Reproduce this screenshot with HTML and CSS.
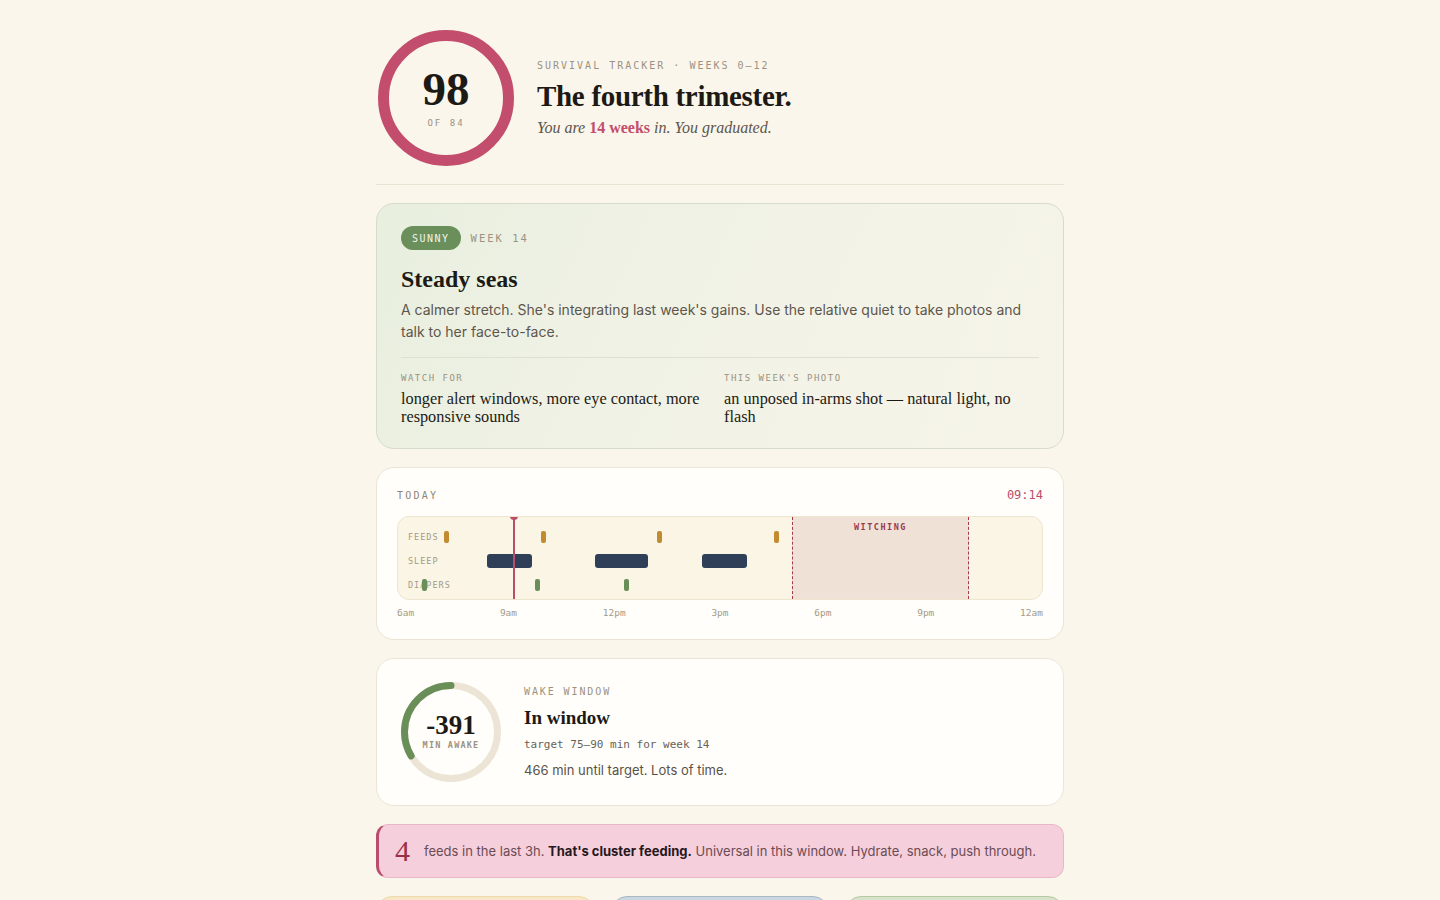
FILE: index.html
```html
<!DOCTYPE html>
<html lang="en">
<head>
<meta charset="utf-8">
<title>Survival Tracker</title>
<link rel="stylesheet" href="styles.css">
</head>
<body>
<main class="page">
  <header class="hero">
    <div class="score-ring">
      <div class="score-num">98</div>
      <div class="score-of">OF 84</div>
    </div>
    <div class="hero-text">
      <div class="eyebrow">SURVIVAL TRACKER · WEEKS 0–12</div>
      <h1 class="hero-title">The fourth trimester.</h1>
      <p class="hero-sub">You are <strong>14 weeks</strong> in. You graduated.</p>
    </div>
  </header>

  <section class="card week-card">
    <div class="week-head">
      <span class="pill">SUNNY</span>
      <span class="week-num">WEEK 14</span>
    </div>
    <h2 class="week-title">Steady seas</h2>
    <p class="week-body">A calmer stretch. She's integrating last week's gains. Use the relative quiet to take photos and talk to her face-to-face.</p>
    <div class="week-cols">
      <div class="week-col">
        <div class="mini-label">WATCH FOR</div>
        <div class="col-value">longer alert windows, more eye contact, more responsive sounds</div>
      </div>
      <div class="week-col">
        <div class="mini-label">THIS WEEK'S PHOTO</div>
        <div class="col-value">an unposed in-arms shot — natural light, no flash</div>
      </div>
    </div>
  </section>

  <section class="card today-card">
    <div class="today-head">
      <span class="today-label">TODAY</span>
      <span class="today-time">09:14</span>
    </div>
    <div class="track">
      <div class="witching" style="left:61.18%;width:27.48%"><span>WITCHING</span></div>
      <span class="row-label row-feeds">FEEDS</span>
      <span class="row-label row-sleep">SLEEP</span>
      <span class="row-label row-diapers">DIAPERS</span>
      <span class="mark feed" style="left:7.22%"></span>
      <span class="mark feed" style="left:22.28%"></span>
      <span class="mark feed" style="left:40.14%"></span>
      <span class="mark feed" style="left:58.31%"></span>
      <span class="mark sleep" style="left:13.82%;width:6.99%"></span>
      <span class="mark sleep" style="left:30.59%;width:8.23%"></span>
      <span class="mark sleep" style="left:47.2%;width:6.99%"></span>
      <span class="mark diaper" style="left:3.65%"></span>
      <span class="mark diaper" style="left:21.2%"></span>
      <span class="mark diaper" style="left:35.17%"></span>
      <span class="now" style="left:17.78%"></span>
    </div>
    <div class="axis">
      <span>6am</span><span>9am</span><span>12pm</span><span>3pm</span><span>6pm</span><span>9pm</span><span>12am</span>
    </div>
  </section>

  <section class="card wake-card">
    <div class="wake-ring">
      <svg class="wake-svg" viewBox="0 0 100 100" width="100" height="100" aria-hidden="true">
        <circle cx="50" cy="50" r="46.5" fill="none" stroke="#ece5d6" stroke-width="7"/>
        <circle cx="50" cy="50" r="46.5" fill="none" stroke="#6a8e58" stroke-width="7" stroke-linecap="round" stroke-dasharray="98 300" transform="translate(100 0) scale(-1 1) rotate(-90 50 50)"/>
      </svg>
      <div class="wake-center">
        <div class="wake-num">-391</div>
        <div class="wake-unit">MIN AWAKE</div>
      </div>
    </div>
    <div class="wake-text">
      <div class="eyebrow small">WAKE WINDOW</div>
      <h3 class="wake-title">In window</h3>
      <div class="wake-target">target 75–90 min for week 14</div>
      <p class="wake-body">466 min until target. Lots of time.</p>
    </div>
  </section>

  <section class="alert">
    <span class="alert-num">4</span>
    <p class="alert-text">feeds in the last 3h. <strong>That's cluster feeding.</strong> Universal in this window. Hydrate, snack, push through.</p>
  </section>

  <section class="tiles">
    <div class="tile tile-yellow"><div class="mini-label">FEEDS</div><div class="tile-num">7</div></div>
    <div class="tile tile-blue"><div class="mini-label">SLEEP</div><div class="tile-num">4h 12m</div></div>
    <div class="tile tile-green"><div class="mini-label">DIAPERS</div><div class="tile-num">5</div></div>
  </section>
</main>
</body>
</html>
```

FILE: styles.css
```css
* { box-sizing: border-box; }

html, body {
  margin: 0;
  padding: 0;
  background: #faf6eb;
}

body {
  font-family: "Inter", "Noto Sans", sans-serif;
  color: #1d1a15;
}

.page {
  width: 688px;
  margin: 0 auto;
  padding: 30px 0 40px;
}

/* ---------- hero ---------- */
.hero {
  display: flex;
  align-items: center;
  gap: 23px;
  padding: 0 0 18px 2px;
  border-bottom: 1px solid #ebe4d4;
}

.score-ring {
  width: 136px;
  height: 136px;
  border-radius: 50%;
  border: 11px solid #c24d6d;
  display: flex;
  flex-direction: column;
  align-items: center;
  justify-content: center;
  flex: none;
}

.score-num {
  font-family: "Liberation Serif", serif;
  font-weight: 700;
  font-size: 47px;
  line-height: 44px;
  color: #1d1a15;
  margin-top: -2px;
}

.score-of {
  font-family: "DejaVu Sans Mono", monospace;
  font-size: 9px;
  letter-spacing: 2px;
  color: #9b9282;
  margin-top: 7px;
}

.eyebrow {
  font-family: "DejaVu Sans Mono", monospace;
  font-size: 10px;
  line-height: 14px;
  letter-spacing: 2px;
  color: #9b9282;
}

.hero-title {
  margin: 6px 0 0;
  font-family: "Liberation Serif", serif;
  font-weight: 700;
  font-size: 29px;
  line-height: 34px;
  color: #1d1a15;
  letter-spacing: -0.3px;
}

.hero-sub {
  margin: 5px 0 0;
  font-family: "Liberation Serif", serif;
  font-style: italic;
  font-size: 16px;
  line-height: 20px;
  color: #5d554b;
}

.hero-sub strong {
  font-style: normal;
  font-weight: 700;
  color: #c24d6d;
}

/* ---------- cards ---------- */
.card {
  margin-top: 18px;
  border-radius: 18px;
  border: 1px solid #ece5d6;
  background: #fffefb;
}

.week-card {
  padding: 22px 24px 22px;
  border-color: #d6dcc9;
  background: linear-gradient(115deg, #e8efdf 0%, #f1f2e6 45%, #f6f4e9 100%);
}

.week-head {
  display: flex;
  align-items: center;
  gap: 10px;
}

.pill {
  display: inline-flex;
  align-items: center;
  height: 24px;
  padding: 0 11px;
  border-radius: 12px;
  background: #6b8f5a;
  color: #f2f4ea;
  font-family: "DejaVu Sans Mono", monospace;
  font-size: 10px;
  letter-spacing: 1.5px;
}

.week-num {
  font-family: "DejaVu Sans Mono", monospace;
  font-size: 10.5px;
  letter-spacing: 2px;
  color: #9b9282;
}

.week-title {
  margin: 15px 0 0;
  font-family: "Liberation Serif", serif;
  font-weight: 700;
  font-size: 24px;
  line-height: 28px;
  color: #1d1a15;
}

.week-body {
  margin: 6px 0 0;
  font-size: 14px;
  line-height: 22px;
  color: #5e564c;
  padding-bottom: 14px;
  border-bottom: 1px solid #dfe0d2;
}

.week-cols {
  display: grid;
  grid-template-columns: 1fr 1fr;
  gap: 8px;
  padding-top: 14px;
}

.mini-label {
  font-family: "DejaVu Sans Mono", monospace;
  font-size: 9px;
  line-height: 12px;
  letter-spacing: 1.5px;
  color: #9b9282;
}

.col-value {
  margin-top: 6px;
  font-family: "Liberation Serif", serif;
  font-size: 16.3px;
  line-height: 18px;
  color: #1d1a15;
  padding-right: 8px;
}

/* ---------- today ---------- */
.today-card {
  padding: 20px 20px 20px;
}

.today-head {
  display: flex;
  justify-content: space-between;
  align-items: center;
  height: 14px;
}

.today-label {
  font-family: "DejaVu Sans Mono", monospace;
  font-size: 10px;
  letter-spacing: 2.2px;
  color: #8e8575;
}

.today-time {
  font-family: "DejaVu Sans Mono", monospace;
  font-size: 12px;
  color: #b94d6a;
}

.track {
  position: relative;
  margin-top: 14px;
  height: 84px;
  border: 1px solid #eee5d1;
  border-radius: 12px;
  background: #fbf5e6;
  overflow: hidden;
}

.witching {
  position: absolute;
  top: 0;
  bottom: 0;
  background: #efe1d5;
  border-left: 1px dashed #a63b50;
  border-right: 1px dashed #a63b50;
  display: flex;
  justify-content: center;
}

.witching span {
  margin-top: 4px;
  font-family: "DejaVu Sans Mono", monospace;
  font-size: 8.5px;
  line-height: 12px;
  font-weight: 700;
  letter-spacing: 1.5px;
  color: #9a3b50;
}

.row-label {
  position: absolute;
  left: 10px;
  font-family: "DejaVu Sans Mono", monospace;
  font-size: 8.5px;
  line-height: 10px;
  letter-spacing: 1px;
  color: #a39a88;
}

.row-feeds { top: 15px; }
.row-sleep { top: 39px; }
.row-diapers { top: 63px; }

.mark {
  position: absolute;
  width: 5px;
  height: 12px;
  border-radius: 2px;
}

.mark.feed { top: 14px; background: #c38b2f; }
.mark.sleep { top: 37px; height: 14px; border-radius: 3px; background: #2e3f57; }
.mark.diaper { top: 62px; background: #6a8e58; }

.now {
  position: absolute;
  top: 0;
  bottom: 0;
  width: 2px;
  background: #b94d6a;
}

.now::before {
  content: "";
  position: absolute;
  top: -5px;
  left: -3px;
  width: 8px;
  height: 8px;
  border-radius: 50%;
  background: #b94d6a;
}

.axis {
  display: flex;
  justify-content: space-between;
  margin-top: 7px;
  font-family: "DejaVu Sans Mono", monospace;
  font-size: 9.5px;
  line-height: 12px;
  color: #a39a88;
}

/* ---------- wake window ---------- */
.wake-card {
  display: flex;
  align-items: center;
  gap: 23px;
  padding: 23px 24px 23px;
}

.wake-ring {
  position: relative;
  width: 100px;
  height: 100px;
  flex: none;
}

.wake-svg { display: block; }

.wake-center {
  position: absolute;
  inset: 0;
  display: flex;
  flex-direction: column;
  align-items: center;
  justify-content: center;
}

.wake-num {
  font-family: "Liberation Serif", serif;
  font-weight: 700;
  font-size: 27px;
  line-height: 28px;
  color: #1d1a15;
  margin-top: -4px;
}

.wake-unit {
  margin-top: 1px;
  font-family: "DejaVu Sans Mono", monospace;
  font-size: 8.5px;
  font-weight: 700;
  letter-spacing: 1.2px;
  color: #9b9282;
}

.eyebrow.small {
  font-size: 10px;
  letter-spacing: 1.9px;
}

.wake-title {
  margin: 7px 0 0;
  font-family: "Liberation Serif", serif;
  font-weight: 700;
  font-size: 19px;
  line-height: 24px;
  color: #1d1a15;
}

.wake-target {
  margin-top: 7px;
  font-family: "DejaVu Sans Mono", monospace;
  font-size: 11px;
  line-height: 16px;
  color: #6a6258;
}

.wake-body {
  margin: 7px 0 0;
  font-size: 13px;
  line-height: 20px;
  color: #5a5248;
}

/* ---------- alert ---------- */
.alert {
  margin-top: 18px;
  display: flex;
  align-items: center;
  gap: 13px;
  padding: 15px 16px 15px 16px;
  border: 1px solid #ebb7c7;
  border-left: 3px solid #b94d6a;
  border-radius: 12px;
  background: #f6cfdc;
}

.alert-num {
  font-family: "Liberation Serif", serif;
  font-size: 30px;
  line-height: 22px;
  color: #9b2f4a;
  width: 16px;
  flex: none;
}

.alert-text {
  margin: 0;
  font-size: 13px;
  line-height: 22px;
  color: #6b4c53;
  white-space: nowrap;
}

.alert-text strong {
  font-weight: 700;
  color: #26181c;
}

/* ---------- tiles ---------- */
.tiles {
  margin-top: 18px;
  display: grid;
  grid-template-columns: repeat(3, 1fr);
  gap: 16px;
}

.tile {
  min-height: 110px;
  border-radius: 16px;
  border: 1px solid;
  padding: 26px 20px 18px;
}

.tile-num {
  margin-top: 8px;
  font-family: "Liberation Serif", serif;
  font-weight: 700;
  font-size: 26px;
}

.tile-yellow { background: #f8e7c6; border-color: #edd9a9; }
.tile-blue { background: #cad7e1; border-color: #a9bac7; }
.tile-green { background: #d7e4ca; border-color: #b5c9a4; }
```
